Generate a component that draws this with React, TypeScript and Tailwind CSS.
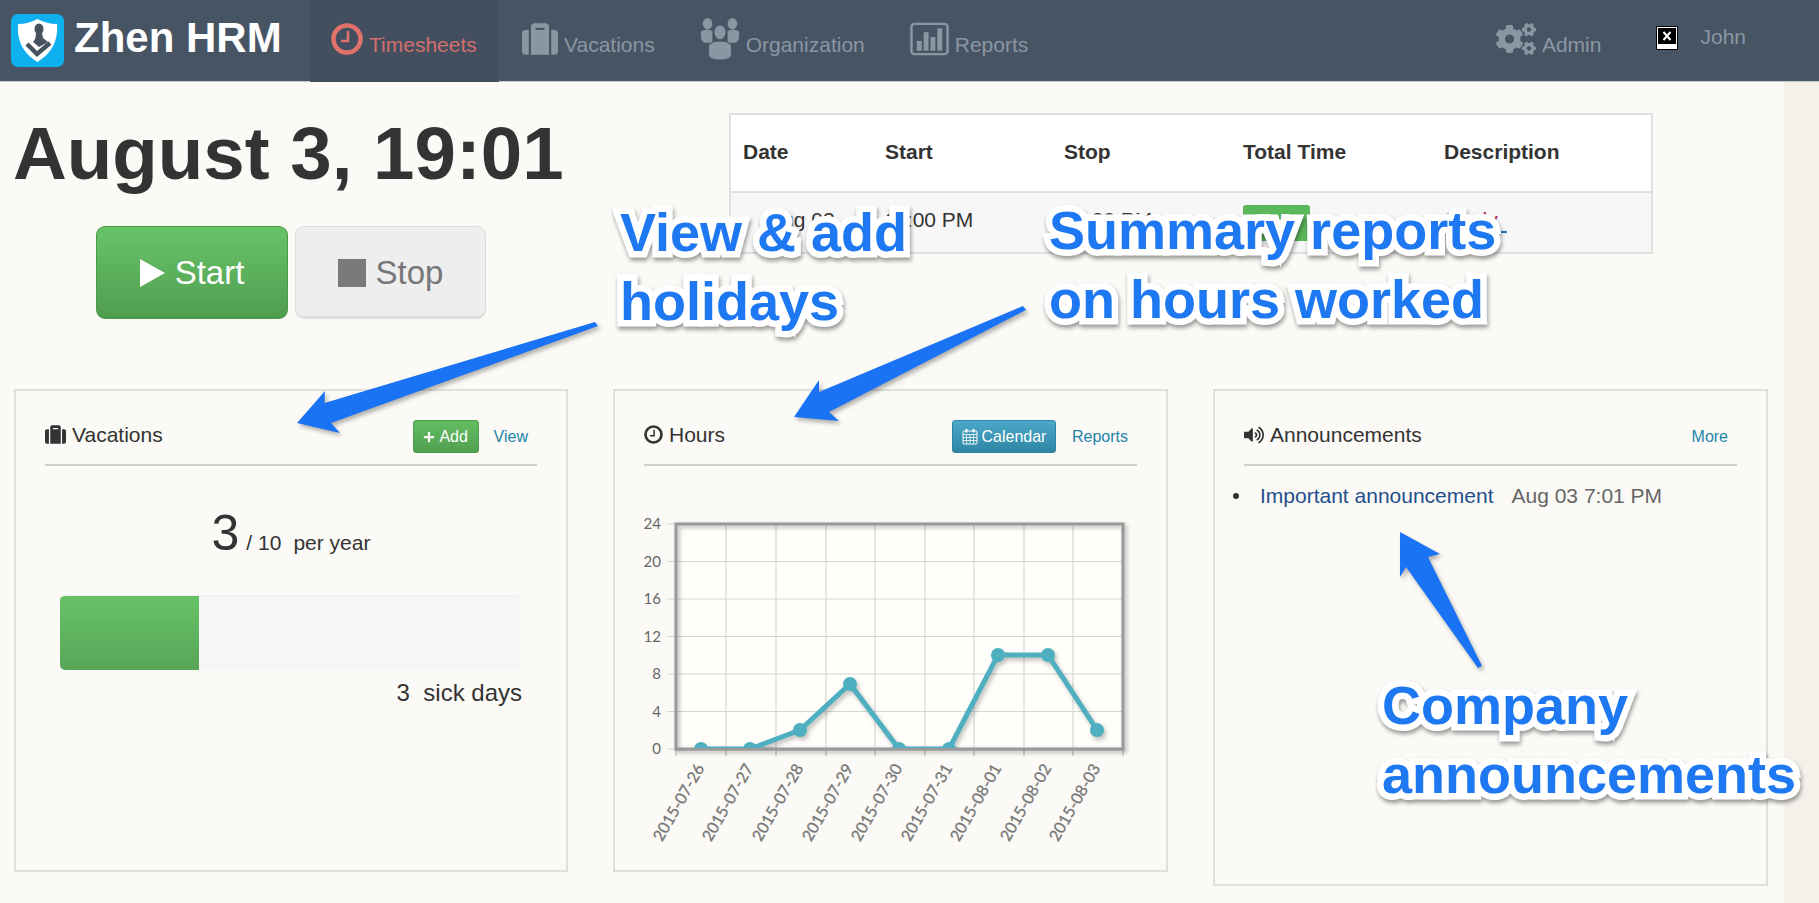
import { FaCogs, FaPlus, FaSuitcase, FaVolumeUp } from "react-icons/fa";

function Logo() {
  return (
    <svg viewBox="0 0 53 53" className="w-[53px] h-[53px] shrink-0">
      <rect width="53" height="53" rx="7" fill="#0fb0ef" />
      <path d="M26.5 5C33 8.5 39 10 46 10C47 24 43 38 26.5 48C10 38 6 24 7 10C14 10 20 8.5 26.5 5Z" fill="#fff" />
      <ellipse cx="28" cy="15" rx="4.5" ry="5.5" fill="#46525f" />
      <path d="M25 19H31L32 24L37 28L28 33L22 28C24 26 25 23 25 19Z" fill="#46525f" />
      <path d="M16 30L26 40L39 29" fill="none" stroke="#46525f" strokeWidth="4.5" />
    </svg>
  );
}

function ClockIcon({ className }: { className: string }) {
  return (
    <svg viewBox="0 0 32 32" className={className}>
      <circle cx="16" cy="16" r="13.5" fill="none" stroke="currentColor" strokeWidth="4.5" />
      <path d="M17 8V18H10" fill="none" stroke="currentColor" strokeWidth="2.6" />
    </svg>
  );
}

function GroupIcon() {
  return (
    <svg viewBox="0 0 40 44" className="w-[40px] h-[42px] text-[#8b96a3]" fill="currentColor">
      <ellipse cx="7" cy="6" rx="5" ry="6" />
      <ellipse cx="33" cy="6" rx="5" ry="6" />
      <path d="M0 14Q7 10 12 14V26H4Q0 24 0 20Z" />
      <path d="M40 14Q33 10 28 14V26H36Q40 24 40 20Z" />
      <ellipse cx="20" cy="15" rx="6.5" ry="8" stroke="#475464" strokeWidth="1.5" />
      <path d="M8 28Q12 24 20 24Q28 24 32 28V38Q32 44 20 44Q8 44 8 38Z" stroke="#475464" strokeWidth="1" />
    </svg>
  );
}

function ChartIcon() {
  return (
    <svg viewBox="0 0 40 34" className="w-[39px] h-[34px] text-[#8b96a3]" fill="currentColor">
      <rect x="1.5" y="1.5" width="37" height="31" rx="3" fill="none" stroke="currentColor" strokeWidth="2.5" />
      <rect x="7" y="19" width="5" height="10" />
      <rect x="14" y="10" width="5" height="19" />
      <rect x="21" y="15" width="5" height="14" />
      <rect x="28" y="6" width="5" height="23" />
    </svg>
  );
}

function CalendarIcon() {
  return (
    <svg viewBox="0 0 16 16" className="w-[16px] h-[17px]" fill="none" stroke="currentColor">
      <rect x="1" y="2.5" width="14" height="13" rx="1" strokeWidth="1" />
      <path d="M1 6H15M1 9H15M1 12H15M4.5 6V15M8 6V15M11.5 6V15" strokeWidth="0.8" />
      <path d="M4.5 0.5V4M11.5 0.5V4" strokeWidth="2" />
    </svg>
  );
}

function BrokenImage() {
  return (
    <svg viewBox="0 0 22 24" className="w-[22px] h-[24px]">
      <rect x="0.5" y="0.5" width="21" height="23" fill="#fff" stroke="#000" />
      <rect x="2" y="2" width="18" height="16" fill="#000" />
      <path d="M7.5 6L14.5 14M14.5 6L7.5 14" stroke="#fff" strokeWidth="2" />
    </svg>
  );
}

function NavItem({ icon, label, className }: { icon: React.ReactNode; label: string; className: string }) {
  return (
    <div className={`flex items-center gap-[6px] text-[21px] text-[#8b96a3] ${className}`}>
      <div className="-mt-[4px] flex">{icon}</div>
      <span className="mt-[9px]">{label}</span>
    </div>
  );
}

function Header() {
  return (
    <header className="h-[82px] bg-[#475464] border-b border-[#c8ccd0] flex items-center pl-[11px] shrink-0">
      <Logo />
      <div className="ml-[10px] w-[236px] text-[42px] leading-none font-bold text-white -mt-[6px]">Zhen HRM</div>
      <div className="h-[82px] w-[189px] bg-[#434f5f] flex items-center pl-[21px] gap-[6px] text-[21px] text-[#d26f6e]">
        <ClockIcon className="w-[32px] h-[32px] -mt-[3px] text-[#e0726b]" />
        <span className="mt-[9px]">Timesheets</span>
      </div>
      <NavItem className="ml-[23px]" icon={<FaSuitcase className="w-[36px] h-[36px]" />} label="Vacations" />
      <NavItem className="ml-[45px]" icon={<GroupIcon />} label="Organization" />
      <NavItem className="ml-[45px]" icon={<ChartIcon />} label="Reports" />
      <NavItem className="ml-auto" icon={<FaCogs className="w-[40px] h-[40px]" />} label="Admin" />
      <div className="ml-[55px] -mt-[6px] flex"><BrokenImage /></div>
      <div className="ml-[22px] mr-[73px] -mt-[7px] text-[21px] text-[#8b96a3]">John</div>
    </header>
  );
}

function TopRow() {
  return (
    <section className="h-[307px] flex shrink-0">
      <div className="w-[729px] shrink-0 pl-[13px]">
        <h1 className="mt-[29px] text-[74.5px] leading-[85px] font-bold text-[#333] whitespace-nowrap">August 3, 19:01</h1>
        <div className="mt-[30px] ml-[83px] flex gap-[7px]">
          <div className="w-[192px] h-[93px] rounded-[9px] border border-[#4c9a4c] border-b-[3px] bg-gradient-to-b from-[#68c468] to-[#519f51] flex items-center justify-center gap-[10px] pt-[2px] text-[33px] text-white">
            <svg viewBox="0 0 25 28" className="w-[25px] h-[28px]">
              <path d="M0 0L25 14L0 28Z" fill="#fff" />
            </svg>
            Start
          </div>
          <div className="w-[191px] h-[93px] rounded-[9px] border border-[#dddddb] border-b-[3px] bg-[#eeeeee] flex items-center justify-center gap-[10px] pt-[2px] text-[33px] text-[#777]">
            <div className="w-[28px] h-[28px] bg-[#7a7a7a]" />
            Stop
          </div>
        </div>
      </div>
      <table className="mt-[31px] w-[924px] h-[141px] table-fixed border-2 border-[#e0e0de] text-[21px] text-[#333] self-start">
        <thead className="bg-white">
          <tr className="h-[78px] border-b-2 border-[#e0e0de] text-left">
            <th className="w-[143px] pl-[12px] pb-[2px] font-bold">Date</th>
            <th className="w-[179px] pl-[12px] pb-[2px] font-bold">Start</th>
            <th className="w-[179px] pl-[12px] pb-[2px] font-bold">Stop</th>
            <th className="w-[201px] pl-[12px] pb-[2px] font-bold">Total Time</th>
            <th className="pl-[12px] pb-[2px] font-bold">Description</th>
          </tr>
        </thead>
        <tbody className="bg-[#f7f7f7]">
          <tr>
            <td className="pl-[37px] pt-[11px] align-top">Aug 03</td>
            <td className="pl-[12px] pt-[11px] align-top">11:00 PM</td>
            <td className="pl-[12px] pt-[11px] align-top">11:30 PM</td>
            <td className="pl-[12px] pt-[12px] align-top">
              <span className="inline-block w-[67px] h-[36px] rounded-[3px] bg-[#5cb85c] text-white text-center">0.5</span>
            </td>
            <td className="pl-[12px] pt-[11px] align-top text-[#b0234b]">
              Study
              <span className="inline-block ml-[3px] w-[6px] h-[2px] bg-[#2a6fc0] align-[-6px]" />
            </td>
          </tr>
        </tbody>
      </table>
    </section>
  );
}

function Card({ title, icon, actions, children, className }: { title: string; icon: React.ReactNode; actions: React.ReactNode; children: React.ReactNode; className: string }) {
  return (
    <div className={`border-2 border-[#dfdfdb] pl-[29px] pr-[29px] shrink-0 ${className}`}>
      <div className="mt-[29px] h-[33px] flex items-center">
        <div className="flex items-center gap-[6px] text-[21px] text-[#333] -mt-[4px]">
          {icon}
          {title}
        </div>
        <div className="ml-auto flex items-center">{actions}</div>
      </div>
      <div className="mt-[11px] h-[2px] bg-[#cfcfcb]" />
      {children}
    </div>
  );
}

const LINK = "text-[16px] text-[#1e84a8]";

function VacationsCard() {
  return (
    <Card
      title="Vacations"
      className="w-[554px] h-[483px]"
      icon={<FaSuitcase className="w-[21px] h-[21px] text-[#333]" />}
      actions={
        <>
          <div className="w-[66px] h-[33px] rounded-[3px] border border-[#4c9a4c] bg-gradient-to-b from-[#62bd62] to-[#51a051] flex items-center justify-center gap-[4px] text-[16px] text-white">
            <FaPlus className="w-[12px] h-[12px]" />
            Add
          </div>
          <span className={`ml-[15px] mr-[9px] ${LINK}`}>View</span>
        </>
      }
    >
      <div className="mt-[38px] flex items-baseline justify-center text-[#333]">
        <span className="text-[50px] leading-[58px]">3</span>
        <span className="ml-[7px] text-[21px]">/ 10</span>
        <span className="ml-[12px] text-[21px]">per year</span>
      </div>
      <div className="mt-[33px] ml-[15px] mr-[16px] h-[75px] rounded-[5px] bg-[#f6f6f7] overflow-hidden border-t border-[#efefee]">
        <div className="w-[139px] h-full bg-gradient-to-b from-[#67c267] to-[#58a658]" />
      </div>
      <div className="mt-[9px] mr-[15px] text-right text-[24px] leading-[28px] text-[#333] whitespace-pre">3  sick days</div>
    </Card>
  );
}

const GRID_X = [676, 726, 776, 826, 875, 925, 974, 1024, 1073, 1123];
const GRID_Y = [
  { label: "24", y: 523 },
  { label: "20", y: 560.5 },
  { label: "16", y: 598 },
  { label: "12", y: 635.5 },
  { label: "8", y: 673 },
  { label: "4", y: 710.5 },
  { label: "0", y: 748 },
];
const SERIES = [
  { x: 701, y: 748, date: "2015-07-26" },
  { x: 750, y: 748, date: "2015-07-27" },
  { x: 800, y: 729, date: "2015-07-28" },
  { x: 850, y: 683, date: "2015-07-29" },
  { x: 899, y: 748, date: "2015-07-30" },
  { x: 949, y: 748, date: "2015-07-31" },
  { x: 998, y: 654, date: "2015-08-01" },
  { x: 1048, y: 654, date: "2015-08-02" },
  { x: 1097, y: 729, date: "2015-08-03" },
];

function HoursChart() {
  return (
    <svg viewBox="640 510 500 340" className="block w-[500px] h-[340px] -ml-[4px] mt-[45px] font-['Lato',sans-serif]">
      <defs>
        <clipPath id="plot">
          <rect x="676" y="523" width="447" height="225" />
        </clipPath>
      </defs>
      <rect x="676" y="523" width="447" height="225" fill="#fffefa" />
      {GRID_X.slice(1, -1).map((x) => (
        <line key={x} x1={x} x2={x} y1="523" y2="748" stroke="#d6d6d2" strokeWidth="1.2" />
      ))}
      {GRID_Y.map((g) => (
        <g key={g.label}>
          <line x1="667" x2="1123" y1={g.y} y2={g.y} stroke="#d6d6d2" strokeWidth="1.2" />
          <text x="661" y={g.y + 5} textAnchor="end" fontSize="15" fill="#666">{g.label}</text>
        </g>
      ))}
      {GRID_X.map((x) => (
        <line key={x} x1={x} x2={x} y1="748" y2="755" stroke="#bbb" strokeWidth="1.2" />
      ))}
      <rect x="676" y="523" width="447" height="225" fill="none" stroke="#999" strokeWidth="3" className="drop-shadow-[2px_2px_2px_rgba(0,0,0,0.3)]" />
      <g clipPath="url(#plot)">
        <g className="drop-shadow-[2px_3px_2px_rgba(0,0,0,0.25)]">
          <polyline points={SERIES.map((p) => `${p.x},${p.y}`).join(" ")} fill="none" stroke="#4eafc0" strokeWidth="5" />
          {SERIES.map((p) => (
            <circle key={p.date} cx={p.x} cy={p.y} r="7" fill="#4eafc0" />
          ))}
        </g>
      </g>
      <rect x="676" y="747" width="447" height="2.5" fill="#999" />
      {SERIES.map((p) => (
        <text key={p.date} transform={`translate(${p.x + 4} 767) rotate(-60)`} textAnchor="end" fontSize="16" fill="#777" stroke="#777" strokeWidth="0.3">
          {p.date}
        </text>
      ))}
    </svg>
  );
}

function HoursCard() {
  return (
    <Card
      title="Hours"
      className="w-[555px] h-[483px] ml-[45px]"
      icon={<ClockIcon className="w-[19px] h-[19px] text-[#333]" />}
      actions={
        <>
          <div className="w-[104px] h-[33px] rounded-[3px] border border-[#2f86a3] bg-gradient-to-b from-[#4ba8c8] to-[#2f85a4] flex items-center justify-center gap-[4px] text-[16px] text-white">
            <CalendarIcon />
            Calendar
          </div>
          <span className={`ml-[16px] mr-[9px] ${LINK}`}>Reports</span>
        </>
      }
    >
      <HoursChart />
    </Card>
  );
}

function AnnouncementsCard() {
  return (
    <Card
      title="Announcements"
      className="w-[555px] h-[497px] ml-[45px]"
      icon={<FaVolumeUp className="w-[20px] h-[20px] text-[#333]" />}
      actions={<span className={`mr-[9px] ${LINK}`}>More</span>}
    >
      <div className="mt-[18px] -ml-[11px] flex items-center text-[21px] leading-[24px]">
        <span className="w-[6px] h-[6px] rounded-full bg-[#333] mr-[21px]" />
        <span className="text-[#1f4e8c]">Important announcement</span>
        <span className="ml-[18px] text-[#666]">Aug 03 7:01 PM</span>
      </div>
    </Card>
  );
}

const NOTE = "absolute text-[54px] leading-[69px] font-bold text-[#1d78f2] whitespace-nowrap [-webkit-text-stroke:13px_#fff] [paint-order:stroke_fill] drop-shadow-[1px_3px_2px_rgba(0,0,0,0.4)]";

function Annotations() {
  return (
    <>
      <svg viewBox="0 0 1819 903" className="absolute left-0 top-0 w-[1819px] h-[903px] pointer-events-none drop-shadow-[2px_3px_2px_rgba(0,0,0,0.3)]">
        <path d="M595 322L598 326L331 423L340 433L297 423L325 391L324.5 403Z" fill="#1a73f5" />
        <path d="M1023 306L1026 310L829 412L839 421L794 417L819 380L819 392Z" fill="#1a73f5" />
        <path d="M1478 668L1482 666L1428 557L1440 554L1400 532L1400 577L1406 567Z" fill="#1a73f5" />
      </svg>
      <div className={`${NOTE} left-[620px] top-[198px]`}>
        View &amp; add
        <br />
        holidays
      </div>
      <div className={`${NOTE} left-[1049px] top-[196px]`}>
        Summary reports
        <br />
        on hours worked
      </div>
      <div className={`${NOTE} left-[1382px] top-[671px]`}>
        Company
        <br />
        announcements
      </div>
    </>
  );
}

export default function App() {
  return (
    <div className="relative h-[903px] overflow-hidden flex bg-[#f3f1ea] font-['Liberation_Sans',Arial,sans-serif]">
      <div className="w-[1784px] shrink-0 bg-[#fbfaf6]" />
      <div className="absolute inset-0 flex flex-col">
        <Header />
        <TopRow />
        <main className="flex items-start pl-[14px]">
          <VacationsCard />
          <HoursCard />
          <AnnouncementsCard />
        </main>
      </div>
      <Annotations />
    </div>
  );
}
